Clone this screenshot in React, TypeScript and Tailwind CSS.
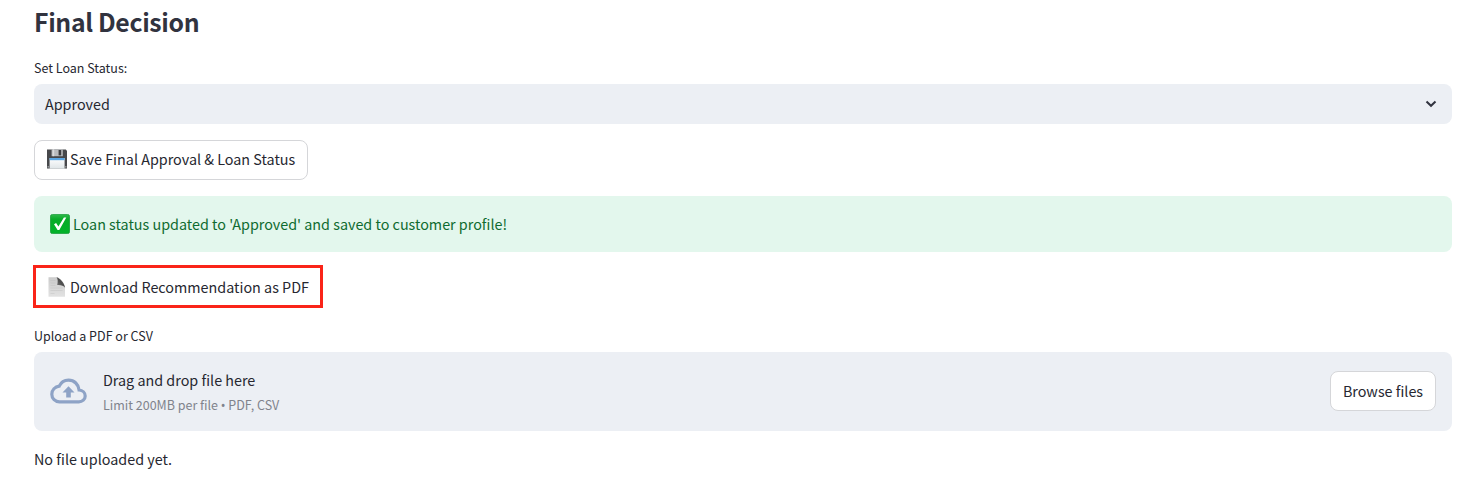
import React from "react";

function FloppyIcon() {
  return (
    <svg width="20" height="20" viewBox="0 0 20 20" aria-hidden="true">
      <defs>
        <linearGradient id="floppyLabel" x1="0" y1="0" x2="0" y2="1">
          <stop offset="0" stopColor="#ffffff" />
          <stop offset="1" stopColor="#dfe5e8" />
        </linearGradient>
      </defs>
      <path d="M0 .5h18.8L20 1.7V19.5H0z" fill="#47484b" />
      <path d="M4.6.2h11.2v7H4.6z" fill="#b9bbbd" />
      <path d="M5.6.2h1.6v7H5.6z" fill="#d9dadb" />
      <path d="M11.6 1h2.6v5.4h-2.6z" fill="#3c3d40" />
      <path d="M2.6 9h15v10.7h-15z" fill="url(#floppyLabel)" />
      <path d="M2.6 9h15v2.2h-15z" fill="#5aa6e4" />
      <path d="M.6 17.2h1.2v1.3H.6zM18.3 17.2h1.1v1.3h-1.1z" fill="#c4c5c6" />
    </svg>
  );
}

function CheckIcon() {
  return (
    <svg width="20" height="20" viewBox="0 0 20 20" aria-hidden="true">
      <defs>
        <linearGradient id="checkFill" x1="0" y1="0" x2="0" y2="1">
          <stop offset="0" stopColor="#2fb94b" />
          <stop offset="0.25" stopColor="#08ab28" />
          <stop offset="1" stopColor="#02b32a" />
        </linearGradient>
      </defs>
      <rect x="0.4" y="0.4" width="19.2" height="19.2" rx="2.2" fill="url(#checkFill)" stroke="#159a35" strokeWidth="0.8" />
      <path d="M4 10.300l2.100-1.200 2.300 3.500 5.500-9.100h2.400L9.300 16H7.600z" fill="#fff" />
    </svg>
  );
}

function PageIcon() {
  return (
    <svg width="20" height="20" viewBox="0 0 20 20" aria-hidden="true">
      <defs>
        <linearGradient id="pageFill" x1="0" y1="0" x2="0" y2="1">
          <stop offset="0" stopColor="#cbcbcb" />
          <stop offset="1" stopColor="#e2e2e2" />
        </linearGradient>
        <linearGradient id="pageFold" x1="0" y1="1" x2="1" y2="0">
          <stop offset="0" stopColor="#858585" />
          <stop offset="0.500" stopColor="#4c4c4c" />
          <stop offset="1" stopColor="#777777" />
        </linearGradient>
      </defs>
      <path d="M1.5.2h8.7c3 1 7.300 6.400 7.800 10.300v9.300H1.5z" fill="url(#pageFill)" />
      <path d="M9.600.2c1.400 1.600 1.300 4.500.6 7.800 3-.4 6.600.4 7.900 2.800C17.700 6.500 13.200 1 9.600.2z" fill="url(#pageFold)" />
      <path d="M3.500 3.500h5M3.500 6h5M3.500 8.500h5M3.500 11h12M3.500 13.500h12M3.500 16.500h4" stroke="#bdbdbd" strokeWidth="0.4" />
    </svg>
  );
}

export default function App() {
  return (
    <main className="h-[491px] w-full bg-white pr-[25px] pl-[34px] font-['Noto_Sans_CJK_SC',sans-serif] text-[14.35px] leading-6 text-[#262730]">
      <h2 className="flex h-[42px] items-center text-[24.8px] font-bold tracking-[-0.34px] text-[#31333f]">Final Decision</h2>
      <div className="mt-[14px] flex h-6 items-center text-[12.5px]">Set Loan Status:</div>
      <button className="mt-[4px] flex h-10 w-full items-center justify-between rounded-lg bg-[#eceff4] pr-[15px] pl-[11px]">
        <span>Approved</span>
        <svg width="12" height="8" viewBox="0 0 12 8" fill="none" aria-hidden="true">
          <path d="M1.500 1.500L6 5.800l4.500-4.300" stroke="#31333f" strokeWidth="2" />
        </svg>
      </button>
      <button className="mt-4 flex h-10 w-[274px] items-center gap-[3px] rounded-lg border border-[#d5d6d9] pb-[2px] pl-3 whitespace-nowrap">
        <FloppyIcon />
        <span>Save Final Approval &amp; Loan Status</span>
      </button>
      <div className="mt-4 flex h-14 items-center gap-[3px] rounded-lg bg-[#e3f7ed] pl-4 text-[#0f6b30]">
        <CheckIcon />
        <span>Loan status updated to 'Approved' and saved to customer profile!</span>
      </div>
      <button className="mt-[13px] -ml-px flex h-[43px] w-[290px] items-center gap-[3px] border-[3px] border-[#fa2418] pl-[11px] whitespace-nowrap">
        <PageIcon />
        <span>Download Recommendation as PDF</span>
      </button>
      <div className="mt-[16px] flex h-6 items-center text-[12.5px]">Upload a PDF or CSV</div>
      <section className="mt-[4px] flex h-[79px] items-center rounded-lg bg-[#eceff4] px-4">
        <svg width="37" height="26" viewBox="0 0 37 26" className="mb-px" aria-hidden="true">
          <path d="M9.500 23.900h19.300c3.600 0 6.400-2.600 6.400-5.900s-2.700-5.800-6.100-6C28.600 6.500 24.300 2.100 18.500 2.100c-4.200 0-7.600 2.400-9.300 6.100C5 8.600 1.800 12 1.800 16.200c0 4.300 3.400 7.700 7.700 7.700z" fill="none" stroke="#8ea3c6" strokeWidth="3.200" />
          <path d="M18.500 8.300l6 6.200h-3.700v4.900h-4.600v-4.900h-3.700z" fill="#8ea3c6" />
        </svg>
        <div className="ml-4 flex-1">
          <div>Drag and drop file here</div>
          <div className="-mb-px pt-px text-[12.5px] text-[#80838c]">
            Limit 200MB per file <span className="font-['Noto_Sans',sans-serif] leading-none">•</span> PDF, CSV
          </div>
        </div>
        <button className="mb-px flex h-10 w-[106px] items-center justify-center rounded-lg border border-[#d5d6d9] bg-white whitespace-nowrap">
          Browse files
        </button>
      </section>
      <p className="mt-[16px] flex h-6 items-center">No file uploaded yet.</p>
    </main>
  );
}
